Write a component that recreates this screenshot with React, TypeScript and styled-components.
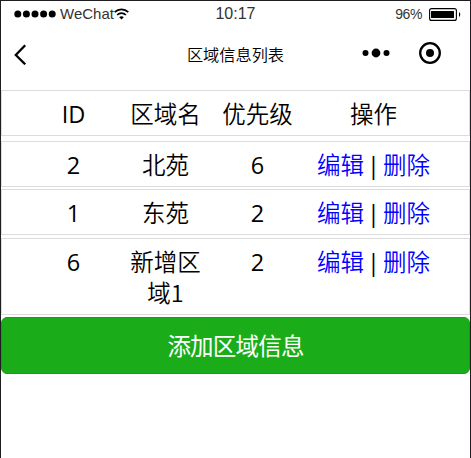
import React from "react";
import styled, { createGlobalStyle } from "styled-components";

const GlobalStyle = createGlobalStyle`
  * { box-sizing: border-box; }
  body { margin: 0; background: #fff; }
`;

const Phone = styled.div`
  height: 458px;
  border: 1px solid #1f1d20;
  border-bottom: 0;
  background: #fff;
  color: #000;
  overflow: hidden;
  font-family: "Open Sans", "Noto Sans CJK SC", sans-serif;
`;

const StatusBar = styled.header`
  display: grid;
  grid-template-columns: 1fr auto 1fr;
  align-items: center;
  height: 26px;
  padding: 0 9px 0 13px;
  font-family: "Liberation Sans", Arial, sans-serif;
`;

const Carrier = styled.div`
  display: flex;
  align-items: center;
  font-size: 15px;
  line-height: 18px;
  color: #333;
  padding-bottom: 1px;
  svg { flex: none; margin-top: 1px; }
`;

const CarrierName = styled.span`
  width: 53px;
  margin-left: 4px;
  margin-right: 1px;
  white-space: nowrap;
`;

const Clock = styled.time`
  font-size: 16px;
  color: #333;
  line-height: 18px;
  margin-left: -4px;
`;

const Battery = styled.div`
  display: flex;
  align-items: center;
  justify-content: flex-end;
  gap: 7px;
  font-size: 14px;
  letter-spacing: -0.4px;
  line-height: 18px;
  color: #333;
  span { padding-bottom: 1px; }
`;

const NavBar = styled.nav`
  display: grid;
  grid-template-columns: 1fr auto 1fr;
  align-items: center;
  height: 54px;
  padding: 0 28px 0 11px;
  svg { display: block; }
`;

const Title = styled.h1`
  margin: 0 0 0 17px;
  font: 350 16.2px/20px "Noto Sans CJK SC", sans-serif;
`;

const Capsule = styled.div`
  display: flex;
  align-items: center;
  justify-content: flex-end;
  gap: 28px;
  padding-bottom: 2px;
`;

const List = styled.main`
  display: flex;
  flex-direction: column;
  padding-top: 9px;
`;

const Row = styled.div<{ $gap: number }>`
  display: grid;
  grid-template-columns: 92px 92px 92px 140px;
  justify-content: center;
  min-height: 46px;
  margin-bottom: ${(p) => p.$gap}px;
  padding: 8px 0 5px;
  border: 1px solid #dcdcdc;
  font-size: 23.5px;
  line-height: 31px;
  text-align: center;
`;

const Cell = styled.div`
  min-width: 0;
`;

const HanCell = styled(Cell)`
  margin: -1px 0 1px;
  font-family: "Noto Sans CJK SC", sans-serif;
  font-weight: 350;
`;

const Actions = styled(Cell)`
  white-space: nowrap;
  word-spacing: -3px;
`;

const Action = styled.a`
  color: #00f;
  font-weight: 350;
  text-decoration: none;
  cursor: pointer;
`;

const AddButton = styled.button`
  height: 57px;
  padding: 0 0 1px;
  border: 1px solid #189c18;
  border-radius: 6px;
  background: #1aad19;
  color: #fff;
  font: 400 23.5px/31px "Noto Sans CJK SC", sans-serif;
  letter-spacing: -0.8px;
`;

const areas = [
  { id: 2, name: "北苑", priority: 6, gap: 2 },
  { id: 1, name: "东苑", priority: 2, gap: 3 },
  { id: 6, name: "新增区域1", priority: 2, gap: 2 },
];

export default function App() {
  return (
    <>
      <GlobalStyle />
      <Phone>
        <StatusBar>
          <Carrier>
            <svg width="42" height="8" viewBox="0 0 42 8">
              {[0, 1, 2, 3, 4].map((i) => (
                <circle key={i} cx={3.8 + i * 8.6} cy="4" r="3.5" fill="#000" />
              ))}
            </svg>
            <CarrierName>WeChat</CarrierName>
            <svg width="16" height="12" viewBox="0 0 16 12" fill="none" stroke="#000" strokeWidth="1.7">
              <path d="M.7 4.2C4.5 .4 10.5 .4 14.3 4.2M3.1 7C5.6 4.6 9.4 4.6 11.9 7" />
              <path d="M5.2 9.2C6.6 8 8.4 8 9.8 9.2L7.5 11.5z" fill="#000" stroke="none" />
            </svg>
          </Carrier>
          <Clock>10:17</Clock>
          <Battery>
            <span>96%</span>
            <svg width="32" height="13" viewBox="0 0 32 13">
              <rect x=".6" y=".6" width="26.8" height="11.8" rx="2" fill="none" stroke="#000" strokeWidth="1.1" />
              <rect x="2" y="3" width="23" height="7" rx=".5" fill="#000" />
              <path d="M30 4c1.7 1 1.7 4 0 5z" fill="#000" />
            </svg>
          </Battery>
        </StatusBar>
        <NavBar>
          <svg width="16" height="22" viewBox="0 0 16 22" fill="none" stroke="#000" strokeWidth="2.3">
            <path d="M13.2 2.2L3.8 12l9.4 9.3" />
          </svg>
          <Title>区域信息列表</Title>
          <Capsule>
            <svg width="28" height="10" viewBox="0 0 28 10">
              <circle cx="3.5" cy="5" r="3" />
              <circle cx="14" cy="5" r="4.4" />
              <circle cx="24.5" cy="5" r="3" />
            </svg>
            <svg width="24" height="24" viewBox="0 0 24 24">
              <circle cx="12" cy="12" r="9.8" fill="none" stroke="#000" strokeWidth="2.3" />
              <circle cx="12" cy="12" r="4" />
            </svg>
          </Capsule>
        </NavBar>
        <List>
          <Row $gap={5}>
            <Cell>ID</Cell>
            <HanCell>区域名</HanCell>
            <HanCell>优先级</HanCell>
            <HanCell>操作</HanCell>
          </Row>
          {areas.map((a) => (
            <Row key={a.id} $gap={a.gap}>
              <Cell>{a.id}</Cell>
              <HanCell>{a.name}</HanCell>
              <Cell>{a.priority}</Cell>
              <Actions>
                <Action>编辑</Action> | <Action>删除</Action>
              </Actions>
            </Row>
          ))}
          <AddButton>添加区域信息</AddButton>
        </List>
      </Phone>
    </>
  );
}
